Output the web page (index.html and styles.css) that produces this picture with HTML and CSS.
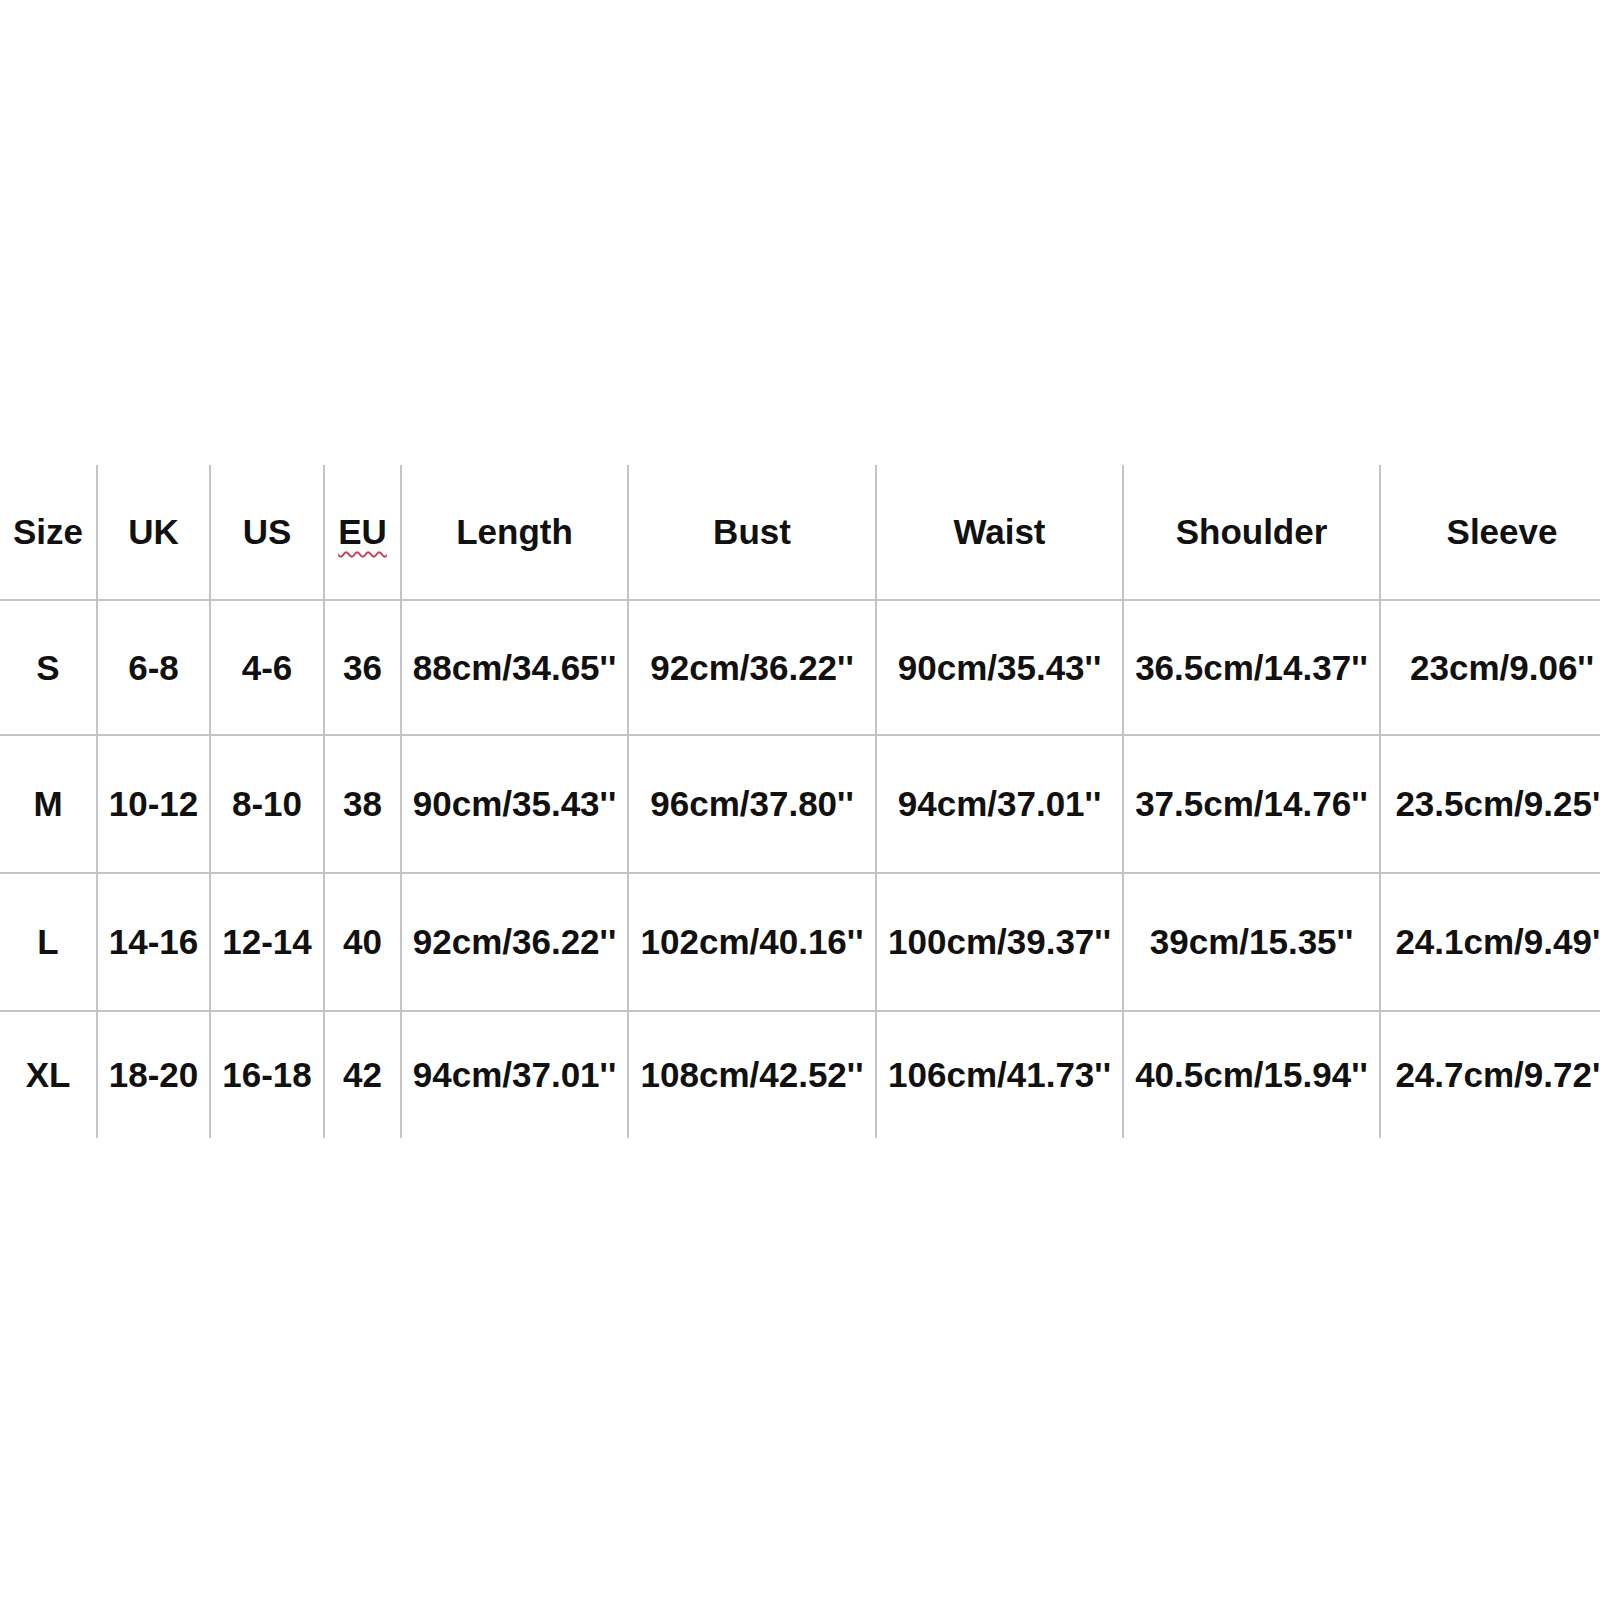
FILE: index.html
```html
<!DOCTYPE html>
<html>
<head>
<meta charset="utf-8">
<link rel="stylesheet" href="styles.css">
</head>
<body>
<div class="page">
  <table class="sizes">
    <colgroup>
      <col class="c-size"><col class="c-uk"><col class="c-us"><col class="c-eu"><col class="c-length"><col class="c-bust"><col class="c-waist"><col class="c-shoulder"><col class="c-sleeve">
    </colgroup>
    <tr class="r-head">
      <td>Size</td><td>UK</td><td>US</td><td><span class="spell">EU</span></td><td>Length</td><td>Bust</td><td>Waist</td><td>Shoulder</td><td>Sleeve</td>
    </tr>
    <tr class="r-s">
      <td>S</td><td>6-8</td><td>4-6</td><td>36</td><td>88cm/34.65''</td><td>92cm/36.22''</td><td>90cm/35.43''</td><td>36.5cm/14.37''</td><td>23cm/9.06''</td>
    </tr>
    <tr class="r-m">
      <td>M</td><td>10-12</td><td>8-10</td><td>38</td><td>90cm/35.43''</td><td>96cm/37.80''</td><td>94cm/37.01''</td><td>37.5cm/14.76''</td><td>23.5cm/9.25''</td>
    </tr>
    <tr class="r-l">
      <td>L</td><td>14-16</td><td>12-14</td><td>40</td><td>92cm/36.22''</td><td>102cm/40.16''</td><td>100cm/39.37''</td><td>39cm/15.35''</td><td>24.1cm/9.49''</td>
    </tr>
    <tr class="r-xl">
      <td>XL</td><td>18-20</td><td>16-18</td><td>42</td><td>94cm/37.01''</td><td>108cm/42.52''</td><td>106cm/41.73''</td><td>40.5cm/15.94''</td><td>24.7cm/9.72''</td>
    </tr>
  </table>
</div>
</body>
</html>
```

FILE: styles.css
```css
html, body {
  margin: 0;
  padding: 0;
  background: #ffffff;
  overflow: hidden;
}

.page {
  width: 1600px;
  height: 1600px;
  overflow: hidden;
  padding-top: 465px;
  box-sizing: border-box;
}

.sizes {
  border-collapse: collapse;
  table-layout: fixed;
  width: 1623px;
  font-family: "Liberation Sans", Arial, sans-serif;
  font-weight: bold;
  font-size: 35px;
  color: #111111;
}

.c-size { width: 97px; }
.c-uk { width: 113px; }
.c-us { width: 114px; }
.c-eu { width: 77px; }
.c-length { width: 227px; }
.c-bust { width: 248px; }
.c-waist { width: 247px; }
.c-shoulder { width: 257px; }
.c-sleeve { width: 243px; }

.sizes td {
  padding: 0;
  text-align: center;
  vertical-align: middle;
  white-space: nowrap;
  border-right: 2px solid #c4c4c4;
  border-top: 2px solid #c4c4c4;
}

.sizes td:last-child {
  border-right: none;
}

.r-head td {
  border-top: none;
  height: 134px;
}

.r-s td { height: 133px; }
.r-m td { height: 136px; }
.r-l td { height: 136px; }
.r-xl td { height: 126px; }

.spell {
  text-decoration: underline wavy #c0405a;
  text-decoration-thickness: 1.5px;
  text-underline-offset: 7px;
}
```
